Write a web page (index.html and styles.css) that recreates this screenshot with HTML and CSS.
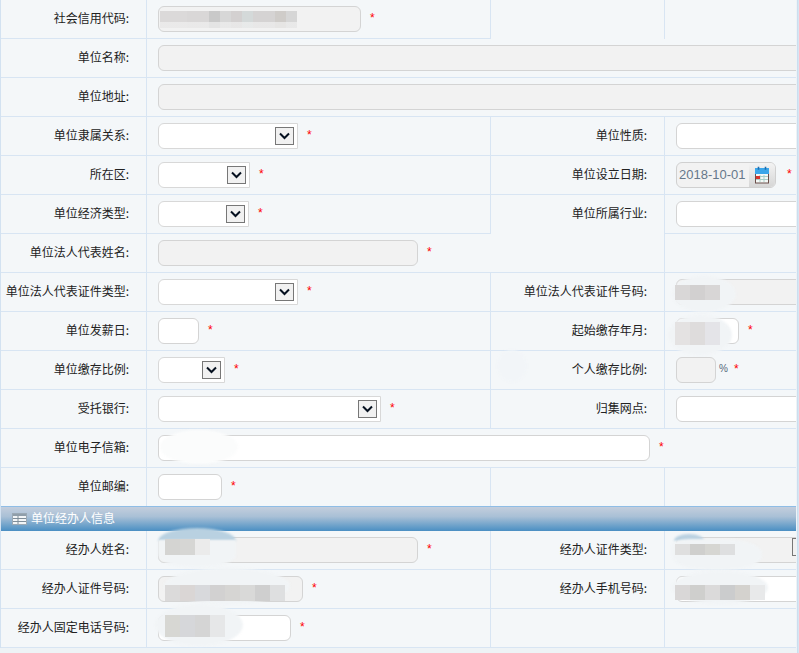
FILE: index.html
```html
<!DOCTYPE html>
<html lang="zh-CN">
<head>
<meta charset="utf-8">
<title>单位信息</title>
<link rel="stylesheet" href="styles.css">
</head>
<body>
<div class="page">
  <main class="sheet">
    <div class="row">
      <div class="label">社会信用代码:</div>
      <div class="value"><div class="field ro w203"></div><span class="star">*</span></div>
      <div class="blank open"></div>
      <div class="blank open last"></div>
    </div>
    <div class="row">
      <div class="label">单位名称:</div>
      <div class="value span3"><div class="field ro wfull"></div></div>
    </div>
    <div class="row">
      <div class="label">单位地址:</div>
      <div class="value span3"><div class="field ro wfull"></div></div>
    </div>
    <div class="row">
      <div class="label">单位隶属关系:</div>
      <div class="value"><div class="select w140"><span class="arrow"><svg viewBox="0 0 17 16"><path d="M4 5.5l4.5 4.5 4.5-4.5"/></svg></span></div><span class="star">*</span></div>
      <div class="label">单位性质:</div>
      <div class="value last"><div class="field wfull"></div></div>
    </div>
    <div class="row">
      <div class="label">所在区:</div>
      <div class="value"><div class="select w92"><span class="arrow"><svg viewBox="0 0 17 16"><path d="M4 5.5l4.5 4.5 4.5-4.5"/></svg></span></div><span class="star">*</span></div>
      <div class="label">单位设立日期:</div>
      <div class="value last">
        <div class="date"><span class="date-text">2018-10-01</span><span class="cal">
          <svg viewBox="0 0 16 18" width="16" height="18">
            <rect x="1.5" y="2.5" width="13" height="14.5" fill="#f4f8f6" stroke="#6b4f4a"/>
            <rect x="1" y="2" width="14" height="6" fill="#3aa6ea"/>
            <path d="M4.5 .8v3M11.5 .8v3" stroke="#1f6fb0" stroke-width="1.6"/>
            <path d="M2 10.5h12M2 13.5h12M6 9v7M10 9v7" stroke="#a9cfc9"/>
            <rect x="2" y="10" width="4" height="3" fill="#d8322c"/>
          </svg>
        </span></div><span class="star star-date">*</span>
      </div>
    </div>
    <div class="row">
      <div class="label">单位经济类型:</div>
      <div class="value"><div class="select w91"><span class="arrow"><svg viewBox="0 0 17 16"><path d="M4 5.5l4.5 4.5 4.5-4.5"/></svg></span></div><span class="star">*</span></div>
      <div class="label open">单位所属行业:</div>
      <div class="value last"><div class="field wfull"></div></div>
    </div>
    <div class="row">
      <div class="label">单位法人代表姓名:</div>
      <div class="value span2"><div class="field ro w260"></div><span class="star">*</span></div>
      <div class="blank last"></div>
    </div>
    <div class="row">
      <div class="label">单位法人代表证件类型:</div>
      <div class="value"><div class="select w140"><span class="arrow"><svg viewBox="0 0 17 16"><path d="M4 5.5l4.5 4.5 4.5-4.5"/></svg></span></div><span class="star">*</span></div>
      <div class="label">单位法人代表证件号码:</div>
      <div class="value last"><div class="field ro wfull"></div></div>
    </div>
    <div class="row">
      <div class="label">单位发薪日:</div>
      <div class="value"><div class="field w41"></div><span class="star">*</span></div>
      <div class="label">起始缴存年月:</div>
      <div class="value last"><div class="field w63"></div><span class="star">*</span></div>
    </div>
    <div class="row">
      <div class="label">单位缴存比例:</div>
      <div class="value"><div class="select w67"><span class="arrow"><svg viewBox="0 0 17 16"><path d="M4 5.5l4.5 4.5 4.5-4.5"/></svg></span></div><span class="star">*</span></div>
      <div class="label">个人缴存比例:</div>
      <div class="value last"><div class="field ro w40"></div><span class="unit">%</span><span class="star star-tight">*</span></div>
    </div>
    <div class="row">
      <div class="label">受托银行:</div>
      <div class="value"><div class="select w223"><span class="arrow"><svg viewBox="0 0 17 16"><path d="M4 5.5l4.5 4.5 4.5-4.5"/></svg></span></div><span class="star">*</span></div>
      <div class="label">归集网点:</div>
      <div class="value last"><div class="field wfull"></div></div>
    </div>
    <div class="row">
      <div class="label">单位电子信箱:</div>
      <div class="value span3"><div class="field w492"></div><span class="star">*</span></div>
    </div>
    <div class="row">
      <div class="label">单位邮编:</div>
      <div class="value"><div class="field w64"></div><span class="star">*</span></div>
      <div class="blank"></div>
      <div class="blank last"></div>
    </div>
    <div class="band">
      <svg class="band-icon" viewBox="0 0 15 12" width="15" height="12">
        <rect x=".5" y=".5" width="14" height="11" fill="#f2f5f7" stroke="#9aa8b4"/>
        <rect x="1" y="1" width="13" height="2" fill="#8f9eaa"/>
        <path d="M1 5.5h13M1 8.5h13M6 3v8" stroke="#7f8e9a"/>
      </svg>
      <span class="band-title">单位经办人信息</span>
    </div>
    <div class="row">
      <div class="label">经办人姓名:</div>
      <div class="value"><div class="field ro w260"></div><span class="star">*</span></div>
      <div class="label">经办人证件类型:</div>
      <div class="value last"><div class="field ro wfull"></div><span class="peek"></span></div>
    </div>
    <div class="row">
      <div class="label">经办人证件号码:</div>
      <div class="value"><div class="field ro w145"></div><span class="star">*</span></div>
      <div class="label">经办人手机号码:</div>
      <div class="value last"><div class="field wfull"></div></div>
    </div>
    <div class="row">
      <div class="label">经办人固定电话号码:</div>
      <div class="value"><div class="field w133"></div><span class="star">*</span></div>
      <div class="blank"></div>
      <div class="blank last"></div>
    </div>
  </main>
  <div class="rail"></div>

  <span class="pix pix-code"></span>
  <div class="blob blob-mail"></div>
  <div class="blob blob-ratio"></div>
  <div class="blob blob-legal"></div><span class="pix pix-legal"></span>
  <div class="blob blob-month"></div><span class="pix pix-month"></span>
  <div class="blob blob-name-top"></div>
  <div class="blob blob-name"></div><span class="pix pix-name"></span>
  <div class="blob blob-type-top"></div>
  <div class="blob blob-type"></div><span class="pix pix-type"></span>
  <div class="blob blob-id"></div><span class="pix pix-id"></span>
  <div class="blob blob-mobile"></div><span class="pix pix-mobile"></span>
  <div class="blob blob-tel"></div><span class="pix pix-tel"></span>
</div>
</body>
</html>
```
FILE: styles.css
```css
* { box-sizing: border-box; }
html, body { margin: 0; height: 100%; overflow: hidden; }
body {
  background: #eef3f6;
  color: #222;
  font: 12px/1.2 "Noto Sans CJK SC", "Liberation Sans", sans-serif;
}
.page { position: relative; display: flex; width: 799px; height: 653px; overflow: hidden; }
.sheet { flex: none; width: 796px; height: 648px; border-left: 1px solid #d3e2f1; overflow: hidden; }
.rail { flex: none; width: 2px; margin-left: 1px; background: linear-gradient(90deg, #c5daee, #dde9f3); }

.row {
  display: grid;
  grid-template-columns: 146px 344px 174px minmax(0, 1fr);
  height: 39px;
  background: #f4f7f9;
}
.label, .value, .blank {
  border-right: 1px solid #d8e5f3;
  border-bottom: 1px solid #d8e5f3;
}
.label {
  display: flex;
  align-items: center;
  justify-content: flex-end;
  padding: 0 17px 2px 0;
  white-space: nowrap;
}
.value {
  display: flex;
  align-items: center;
  padding-left: 11px;
  overflow: hidden;
  min-width: 0;
  position: relative;
}
.span3 { grid-column: 2 / -1; border-right: 0; }
.span2 { grid-column: 2 / 4; }
.last { border-right: 0; }
.open { border-bottom: 0; }

.field {
  flex: none;
  height: 26px;
  background: #fff;
  border: 1px solid #d4d4d4;
  border-radius: 6px;
}
.ro { background: #f2f2f2; }
.wfull { width: 700px; }
.w203 { width: 203px; }
.w260 { width: 260px; }
.w41 { width: 41px; }
.w63 { width: 63px; }
.w40 { width: 40px; }
.w492 { width: 492px; }
.w64 { width: 64px; }
.w145 { width: 145px; }
.w133 { width: 133px; }

.select {
  flex: none;
  display: flex;
  align-items: center;
  justify-content: flex-end;
  height: 26px;
  padding-right: 3px;
  background: #fff;
  border: 1px solid #d8d8d8;
  border-radius: 6px 0 0 6px;
}
.w140 { width: 140px; }
.w92 { width: 92px; }
.w91 { width: 91px; }
.w67 { width: 67px; }
.w223 { width: 223px; }
.arrow {
  display: block;
  width: 19px;
  height: 18px;
  background: #f1f1f1;
  border: 1px solid #777;
}
.arrow svg { display: block; width: 17px; height: 16px; }
.arrow path { fill: none; stroke: #05101f; stroke-width: 2; }

.star {
  margin: -3px 0 0 9px;
  color: #f00;
  font: 12px/1 "Liberation Sans", sans-serif;
}
.star-tight { margin-left: 6px; }
.star-date { margin-left: 11px; }
.unit {
  margin: -2px 0 0 3px;
  color: #55687a;
  font: 10px/1 "Liberation Sans", sans-serif;
}

.date {
  flex: none;
  display: flex;
  width: 100px;
  height: 26px;
  background: #f2f2f2;
  border: 1px solid #d0d0d0;
  border-radius: 6px;
  overflow: hidden;
}
.date-text {
  flex: 1;
  padding-left: 2px;
  color: #66788a;
  font: 13px/24px "Liberation Sans", sans-serif;
}
.cal {
  display: flex;
  align-items: center;
  justify-content: center;
  flex: none;
  width: 26px;
  background: linear-gradient(#f3f3f3, #d6d6d6);
}

.band {
  display: flex;
  align-items: center;
  gap: 4px;
  height: 25px;
  margin-top: -1px;
  position: relative;
  padding-left: 11px;
  color: #fff;
  border-top: 1px solid #8fbde6;
  background: linear-gradient(#c3cedd, #a9c0d6 40%, #4a8fc3);
}
.band-icon { flex: none; }
.band-title { margin-top: -2px; }

.peek {
  position: absolute;
  right: 0;
  top: 7px;
  width: 4px;
  height: 18px;
  background: #f1f1f1;
  border: 1px solid #777;
  border-right: 0;
}

.blob { position: absolute; background: #f1f4f6; border-radius: 50%; filter: blur(1px); }
.blob-mail { left: 160px; top: 430px; width: 78px; height: 34px; background: #fbfcfc; }
.blob-ratio { left: 497px; top: 350px; width: 30px; height: 32px; background: #f2f5f8; }
.blob-legal { left: 672px; top: 276px; width: 64px; height: 36px; }
.blob-month { left: 668px; top: 315px; width: 64px; height: 40px; }
.blob-name-top { left: 158px; top: 528px; width: 78px; height: 13px; background: #b9d1e1; border-radius: 50% 50% 0 0 / 100% 100% 0 0; }
.blob-name { left: 158px; top: 540px; width: 78px; height: 27px; border-radius: 0 0 45% 45%; }
.blob-type-top { left: 674px; top: 534px; width: 30px; height: 7px; background: #b9d1e1; border-radius: 50% 50% 0 0 / 100% 100% 0 0; }
.blob-type { left: 672px; top: 539px; width: 90px; height: 31px; border-radius: 20% 45% 45% 45%; }
.blob-id { left: 164px; top: 568px; width: 126px; height: 36px; }
.blob-mobile { left: 672px; top: 571px; width: 96px; height: 33px; }
.blob-tel { left: 155px; top: 604px; width: 88px; height: 42px; }

.pix { display: block; position: absolute; }
.pix-code {
  left: 160px;
  top: 11px;
  width: 137px;
  height: 17px;
  background:
    linear-gradient(#0000 0 11px, #f2f2f2a8 11px),
    linear-gradient(90deg, #dbd9d9 0 27px, #d9d7d7 27px 49px, #c9c9c9 49px 60px, #d7d7d7 60px 71px, #d3d0d0 71px 82px, #d4d9d9 82px 93px, #d5d3d3 93px 115px, #cfccc9 115px 126px, #d6d6d6 126px);
}
.pix-legal {
  left: 675px; top: 285px; width: 45px; height: 15px;
  background: linear-gradient(90deg, #d9d7d7 0 15px, #d2d0d0 15px 30px, #d8d6d6 30px);
}
.pix-month {
  left: 675px; top: 322px; width: 45px; height: 23px;
  background: linear-gradient(90deg, #e4e2e2 0 15px, #dedcdc 15px 30px, #e4e4e8 30px);
}
.pix-name {
  left: 165px; top: 539px; width: 45px; height: 16px;
  background: linear-gradient(90deg, #d4d4d2 0 15px, #d6d6d4 15px 30px, #ebebeb 30px);
}
.pix-type {
  left: 675px; top: 544px; width: 60px; height: 11px;
  background: linear-gradient(90deg, #dfdfdf 0 15px, #cfcfcd 15px 30px, #d6d6d2 30px 45px, #dedfe0 45px);
}
.pix-id {
  left: 165px; top: 585px; width: 120px; height: 16px;
  background: linear-gradient(90deg, #dbdada 0 15px, #dad6d5 15px 30px, #d8d9dc 30px 45px, #d2d1d1 45px 60px, #d6d5d3 60px 75px, #d9d9d8 75px 90px, #cfcfcf 90px 105px, #dedfe0 105px);
}
.pix-mobile {
  left: 675px; top: 585px; width: 90px; height: 15px;
  background: linear-gradient(90deg, #d9d7d7 0 15px, #cfcfcd 15px 30px, #dbdada 30px 45px, #cbcccd 45px 60px, #d4d2ce 60px 75px, #e8e9ea 75px);
}
.pix-tel {
  left: 165px; top: 615px; width: 60px; height: 22px;
  background: linear-gradient(90deg, #d7d7d3 0 15px, #d6d7da 15px 30px, #d5d5d5 30px 45px, #e6e7e8 45px);
}
```
